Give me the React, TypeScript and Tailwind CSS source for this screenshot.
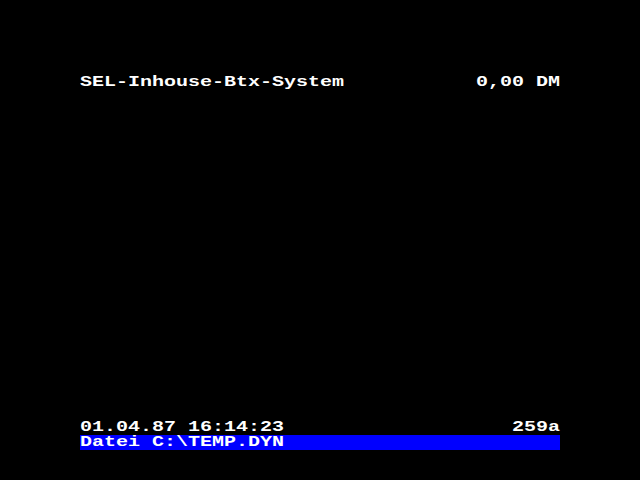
import React from 'react';

// Btx terminal screen: 40 columns x 12px cells, text stretched horizontally
const cell = "inline-block whitespace-pre font-bold text-[15px] leading-[15px] scale-x-[1.3333]";

function Row({ left, right, className = '' }: { left: string; right?: string; className?: string }) {
    return (
        <div className={`flex justify-between h-[15px] ${className}`}>
            <span className={`${cell} origin-left`}>{left}</span>
            {right && <span className={`${cell} origin-right`}>{right}</span>}
        </div>
    );
}

export default function App() {
    return (
        <div
            className="w-[640px] h-[480px] bg-black text-white flex flex-col px-[80px] pt-[75px] pb-[30px] overflow-hidden"
            style={{ fontFamily: '"Liberation Mono", "DejaVu Sans Mono", monospace' }}
        >
            <Row left="SEL-Inhouse-Btx-System" right="0,00 DM" />
            <div className="flex-1" />
            <Row left="01.04.87 16:14:23" right="259a" />
            <Row left="Datei C:\TEMP.DYN" className="bg-[#0000ff]" />
        </div>
    );
}
